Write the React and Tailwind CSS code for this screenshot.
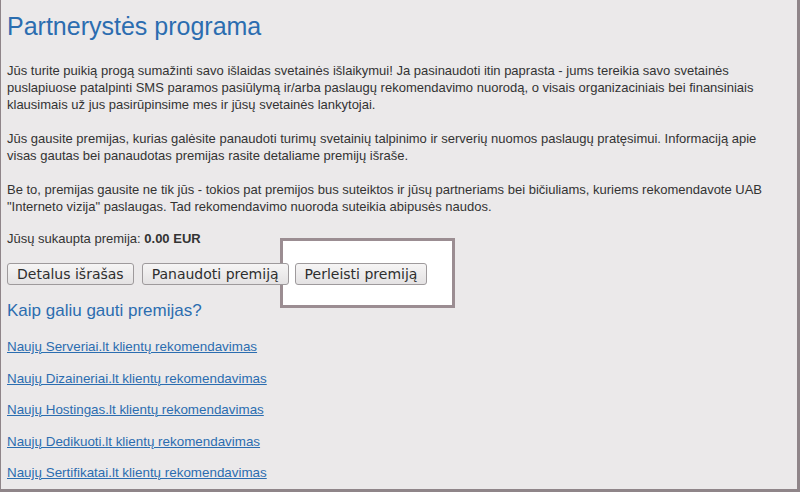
import React from "react";

const links = [
  "Naujų Serveriai.lt klientų rekomendavimas",
  "Naujų Dizaineriai.lt klientų rekomendavimas",
  "Naujų Hostingas.lt klientų rekomendavimas",
  "Naujų Dedikuoti.lt klientų rekomendavimas",
  "Naujų Sertifikatai.lt klientų rekomendavimas",
];

function Btn({ children }) {
  return (
    <button className="relative z-10 h-[22px] px-[9px] rounded-[3px] border border-[#9e9a9c] bg-gradient-to-b from-[#f6f5f5] to-[#e4e2e3] text-[14px] text-[#2e2e2e] font-['DejaVu_Sans',sans-serif] leading-none">
      {children}
    </button>
  );
}

export default function App() {
  return (
    <div className="w-[800px] h-[492px] overflow-hidden bg-[#ebe9ea] border-l border-r-[3px] border-b-[3px] border-[#8f8589] font-['Liberation_Sans',Arial,sans-serif] text-[13px] leading-[17px] text-[#333]">
      <div className="pl-[6px] pr-[14px]">
        <h1 className="pt-[10px] text-[25px] leading-[32px] text-[#2b6db0]">Partnerystės programa</h1>

        <p className="mt-[20px]">
          Jūs turite puikią progą sumažinti savo išlaidas svetainės išlaikymui! Ja pasinaudoti itin paprasta - jums tereikia savo svetainės puslapiuose patalpinti SMS paramos pasiūlymą ir/arba paslaugų rekomendavimo nuorodą, o visais organizaciniais bei finansiniais klausimais už jus pasirūpinsime mes ir jūsų svetainės lankytojai.
        </p>
        <p className="mt-[17px]">
          Jūs gausite premijas, kurias galėsite panaudoti turimų svetainių talpinimo ir serverių nuomos paslaugų pratęsimui. Informaciją apie visas gautas bei panaudotas premijas rasite detaliame premijų išraše.
        </p>
        <p className="mt-[17px]">
          Be to, premijas gausite ne tik jūs - tokios pat premijos bus suteiktos ir jūsų partneriams bei bičiuliams, kuriems rekomendavote UAB "Interneto vizija" paslaugas. Tad rekomendavimo nuoroda suteikia abipusės naudos.
        </p>
        <p className="mt-[15px]">
          Jūsų sukaupta premija: <b className="font-bold">0.00 EUR</b>
        </p>

        <div className="relative mt-[16px] flex">
          <div className="absolute left-[273px] top-[-25px] w-[175px] h-[70px] border-[3px] border-[#9b8d92] bg-white" />
          <Btn>Detalus išrašas</Btn>
          <div className="w-[8px]" />
          <Btn>Panaudoti premiją</Btn>
          <div className="w-[6px]" />
          <Btn>Perleisti premiją</Btn>
        </div>

        <h2 className="mt-[15px] text-[17px] leading-[22px] text-[#2b6db0]">Kaip galiu gauti premijas?</h2>

        <div className="mt-[16px] flex flex-col gap-[14.5px]">
          {links.map((l) => (
            <a key={l} href="#" className="text-[13.4px] text-[#2b6db0] underline w-fit">
              {l}
            </a>
          ))}
        </div>
      </div>
    </div>
  );
}
